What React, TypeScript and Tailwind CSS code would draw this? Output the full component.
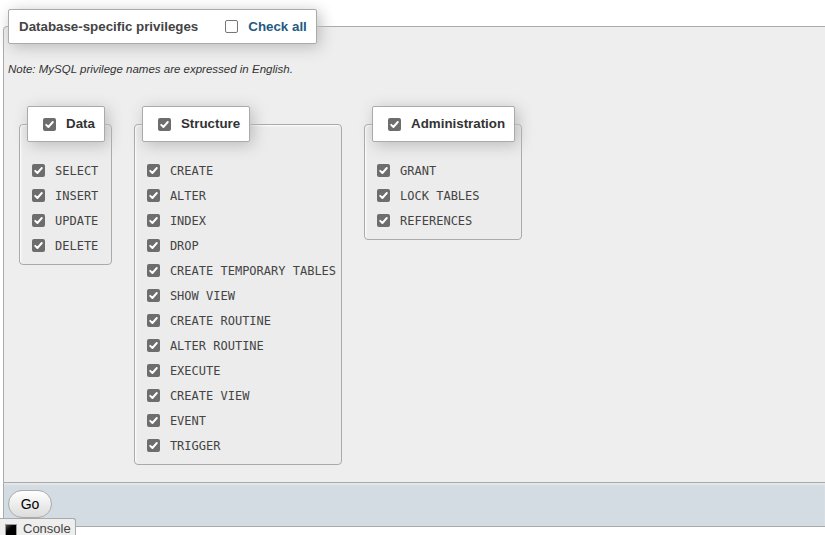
import React from "react";

function Box({ checked = true }: { checked?: boolean }) {
  if (!checked) {
    return <span className="inline-block w-[13px] h-[13px] rounded-[2px] border border-[#767676] bg-white shrink-0" />;
  }
  return (
    <span className="inline-flex w-[13px] h-[13px] rounded-[2px] bg-[#6d6d6d] items-center justify-center shrink-0">
      <svg width="11" height="11" viewBox="0 0 11 11">
        <path d="M2.2 5.8 L4.4 8 L8.8 3" stroke="white" strokeWidth="1.9" fill="none" strokeLinecap="round" strokeLinejoin="round" />
      </svg>
    </span>
  );
}

function Group({ title, items }: { title: string; items: string[] }) {
  return (
    <fieldset className="mx-[11px] border border-[#aaa] rounded-[4px] pl-[7px] pr-[6px] pt-[16px] pb-[6px] bg-[#ececec] shadow-[inset_1px_1px_2px_#fff]">
      <legend className="p-0">
        <div className="h-[36px] flex items-center bg-white border border-[#aaa] rounded-[2px] shadow-[3px_3px_15px_#bbb] pl-[15px] pr-[9px] gap-[10px] font-bold text-[13.33px] text-[#333]">
          <Box />
          <span>{title}</span>
        </div>
      </legend>
      {items.map((it) => (
        <div key={it} className="h-[25px] flex items-center pl-[5px] gap-[10px] font-['DejaVu_Sans_Mono',monospace] text-[12px] text-[#444] whitespace-pre">
          <Box />
          <span className="-mr-[1px]">{it}</span>
        </div>
      ))}
    </fieldset>
  );
}

export default function App() {
  return (
    <div className="relative w-[825px] h-[535px] overflow-hidden bg-white font-['Liberation_Sans',Arial,sans-serif] text-[#333]">
      <fieldset className="ml-[3px] mt-[9px] w-[850px] border border-[#aaa] rounded-tl-[4px] bg-[#eee] pl-[4px] pt-[19px] pb-[17px]">
        <legend className="p-0">
          <div className="h-[35px] flex items-center bg-white border border-[#aaa] rounded-[2px] shadow-[3px_3px_15px_#bbb] pl-[10px] pr-[9px] text-[13.33px] font-bold">
            <span className="text-[#444]">Database-specific privileges</span>
            <span className="ml-[27px] flex"><Box checked={false} /></span>
            <span className="ml-[10px] text-[#235a81]">Check all</span>
          </div>
        </legend>
        <div className="text-[11.5px] italic leading-[13px] text-[#333]">Note: MySQL privilege names are expressed in English.</div>
        <div className="flex items-start mt-[30px]">
          <Group title="Data" items={["SELECT", "INSERT", "UPDATE", "DELETE"]} />
          <Group
            title="Structure"
            items={[
              "CREATE",
              "ALTER",
              "INDEX",
              "DROP",
              "CREATE TEMPORARY TABLES",
              "SHOW VIEW",
              "CREATE ROUTINE",
              "ALTER ROUTINE",
              "EXECUTE",
              "CREATE VIEW",
              "EVENT",
              "TRIGGER",
            ]}
          />
          <Group title="Administration" items={["GRANT", "LOCK TABLES", "REFERENCES"]} />
        </div>
      </fieldset>
      <div className="ml-[3px] h-[44px] bg-[#d3dce3] border-b border-l border-[#aaa] pl-[4px] pt-[7px] shadow-[inset_0_2px_2px_#e4e8eb]">
        <button className="h-[28px] w-[44px] rounded-[14px] border border-[#aaa] bg-gradient-to-b from-white to-[#dcdcdc] text-[14px] text-black">Go</button>
      </div>
      <div className="absolute left-0 bottom-0 w-[76px] h-[17px] bg-[#eee] border-t border-r border-[#aaa] rounded-tr-[3px] flex items-start pl-[5px]">
        <span className="mt-[5px] w-[12px] h-[12px] bg-gradient-to-br from-[#555] via-black to-black border border-[#999] shrink-0" />
        <span className="ml-[6px] pt-[1px] text-[13px] leading-[17px] text-[#444]">Console</span>
      </div>
    </div>
  );
}
